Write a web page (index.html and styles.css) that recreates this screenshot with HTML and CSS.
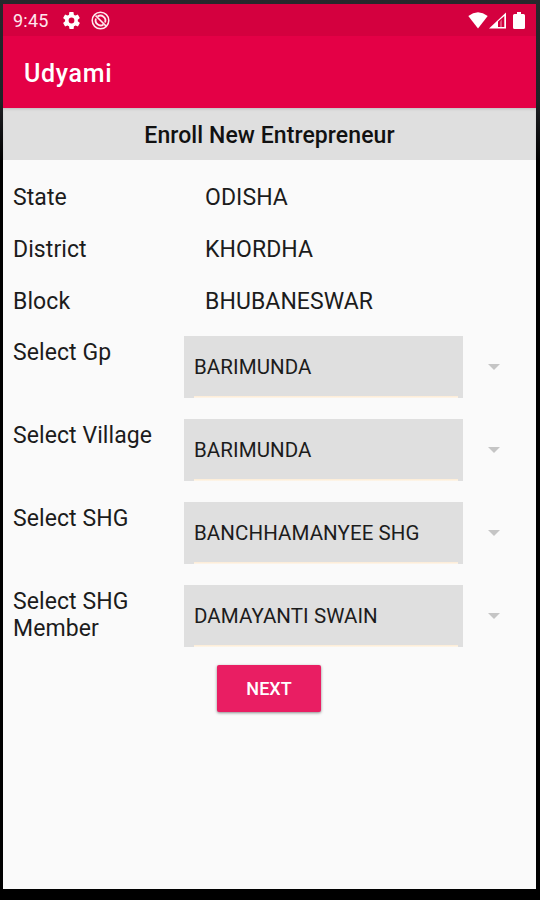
FILE: index.html
```
<!DOCTYPE html>
<html lang="en">
<head>
<meta charset="utf-8">
<title>Udyami</title>
<link rel="stylesheet" href="styles.css">
</head>
<body>
<div class="screen">
  <div class="status">
    <span class="time">9:45</span>
    <svg class="gear" width="17" height="17" viewBox="2 2 20 20"><path fill="#fff" fill-rule="evenodd" d="M19.4 13a7.800 7.800 0 0 0 0-2l2.100-1.600c.2-.2.2-.4.100-.6l-2-3.500c-.1-.2-.4-.3-.6-.2l-2.500 1a7.500 7.500 0 0 0-1.700-1l-.4-2.600c0-.3-.2-.5-.5-.5h-4c-.2 0-.4.200-.5.400l-.3 2.700a7.500 7.500 0 0 0-1.700 1l-2.500-1c-.2-.1-.5 0-.6.200l-2 3.500c-.1.200-.1.500.1.600L4.500 11a7.800 7.800 0 0 0 0 2l-2.100 1.600c-.2.200-.2.400-.1.600l2 3.500c.1.200.4.300.6.200l2.500-1c.5.400 1.100.7 1.700 1l.4 2.600c0 .3.200.5.500.5h4c.3 0 .5-.2.500-.4l.4-2.700a7.500 7.500 0 0 0 1.700-1l2.500 1c.2.100.5 0 .6-.2l2-3.500c.1-.2.1-.5-.1-.6zM12 15.400a3.400 3.400 0 1 1 0-6.800 3.400 3.400 0 0 1 0 6.800z"/></svg>
    <svg class="sync" width="19" height="19" viewBox="0 0 19 19" fill="none" stroke="#ffe8ee"><circle cx="9.500" cy="9.500" r="8.300" stroke-width="1.500"/><path d="M6.500 5.500A5 5 0 0 1 14 11.500M12.500 13.500A5 5 0 0 1 5 7.500" stroke-width="1.800"/><path d="M4.500 4.500l10.500 10.500" stroke-width="1.700"/></svg>
    <span class="spacer"></span>
    <svg width="20" height="17" viewBox="0 0 20 17"><path fill="#fff" d="M.3 4Q10-3.300 19.700 4L10 16.500z"/></svg>
    <svg class="signal" width="18" height="17" viewBox="0 0 18 17"><path fill="#fff" fill-rule="evenodd" d="M0 16.500L17 .5v16zM9 9.500V15h6.300V4z"/><path fill="#fff" d="M11 9.500l2-2V15h-2z" opacity=".3"/></svg>
    <svg class="battery" width="12" height="17" viewBox="0 0 12 17"><path fill="#fff" d="M4 0h4v2h2.500q1.500 0 1.500 1.500v12q0 1.500-1.500 1.500h-9Q0 17 0 15.500v-12Q0 2 1.500 2H4z"/></svg>
  </div>
  <header class="appbar"><span>Udyami</span></header>
  <h1 class="heading"><span>Enroll New Entrepreneur</span></h1>
  <main class="form">
    <div class="info"><span>State</span><span class="value">ODISHA</span></div>
    <div class="info"><span>District</span><span class="value">KHORDHA</span></div>
    <div class="info"><span>Block</span><span class="value">BHUBANESWAR</span></div>
    <div class="pick"><label>Select Gp</label><div class="box"><span>BARIMUNDA</span></div><i class="arrow"></i></div>
    <div class="pick"><label>Select Village</label><div class="box"><span>BARIMUNDA</span></div><i class="arrow"></i></div>
    <div class="pick"><label>Select SHG</label><div class="box"><span>BANCHHAMANYEE SHG</span></div><i class="arrow"></i></div>
    <div class="pick"><label>Select SHG Member</label><div class="box"><span>DAMAYANTI SWAIN</span></div><i class="arrow"></i></div>
    <button class="next"><span>NEXT</span></button>
  </main>
</div>
</body>
</html>
```
FILE: styles.css
```
* { box-sizing: border-box; }
body {
  margin: 0;
  height: 900px;
  padding: 4px 4px 11px 3px;
  background: linear-gradient(#26282c, #202226 100px, #000 160px);
  font-family: Roboto, sans-serif;
  color: #1c1c1c;
}
.screen {
  display: flex;
  flex-direction: column;
  height: 885px;
  background: #fafafa;
  overflow: hidden;
}
.status {
  display: flex;
  align-items: center;
  height: 32px;
  padding: 0 11px 0 10px;
  background: #d4003f;
}
.time { color: #ffe8ee; font-size: 18px; letter-spacing: 0.2px; width: 50px; }
.sync { margin-left: 11px; }
.spacer { flex: 1; }
.signal { margin-left: 1px; }
.battery { margin-left: 6px; }
.appbar {
  display: flex;
  align-items: center;
  height: 72px;
  padding: 2px 0 0 21px;
  background: #e40046;
  color: #fff;
  font-size: 25px;
  font-weight: 500;
  letter-spacing: 0.7px;
}
.heading {
  display: flex;
  align-items: center;
  justify-content: center;
  height: 52px;
  margin: 0;
  padding-top: 2px;
  background: #dfdfdf;
  box-shadow: inset 0 2px 3px -1px #bbb;
  font-size: 23px;
  font-weight: 500;
  letter-spacing: 0.08px;
  color: #111;
}
.form { padding: 11px 10px 0; font-size: 23px; letter-spacing: 0.08px; }
.info {
  display: grid;
  grid-template-columns: 192px 1fr;
  align-items: center;
  height: 52px;
}
.pick {
  display: grid;
  grid-template-columns: 171px 279px 1fr;
  height: 62px;
  margin-bottom: 21px;
}
.info + .pick { margin-top: 9px; }
.pick label { line-height: 27px; padding: 3px 20px 0 0; }
.box {
  display: flex;
  align-items: center;
  padding-left: 10px;
  background: linear-gradient(#fdebd3, #fdf6ec) 10px 100% / 264px 2px no-repeat #dfdfdf;
  font-size: 20.500px;
}
.arrow {
  width: 12px;
  height: 6px;
  margin: 28px 0 0 25px;
  background: #c5c5c5;
  clip-path: polygon(0 0, 100% 0, 50% 100%);
}
.next {
  display: block;
  width: 104px;
  height: 47px;
  margin: -3px 0 0 204px;
  padding: 0;
  border: 0;
  border-radius: 2px;
  background: #e91e63;
  box-shadow: 0 1px 3px rgba(0, 0, 0, .45);
  color: #fff;
  font: 500 18px Roboto, sans-serif;
}
```
